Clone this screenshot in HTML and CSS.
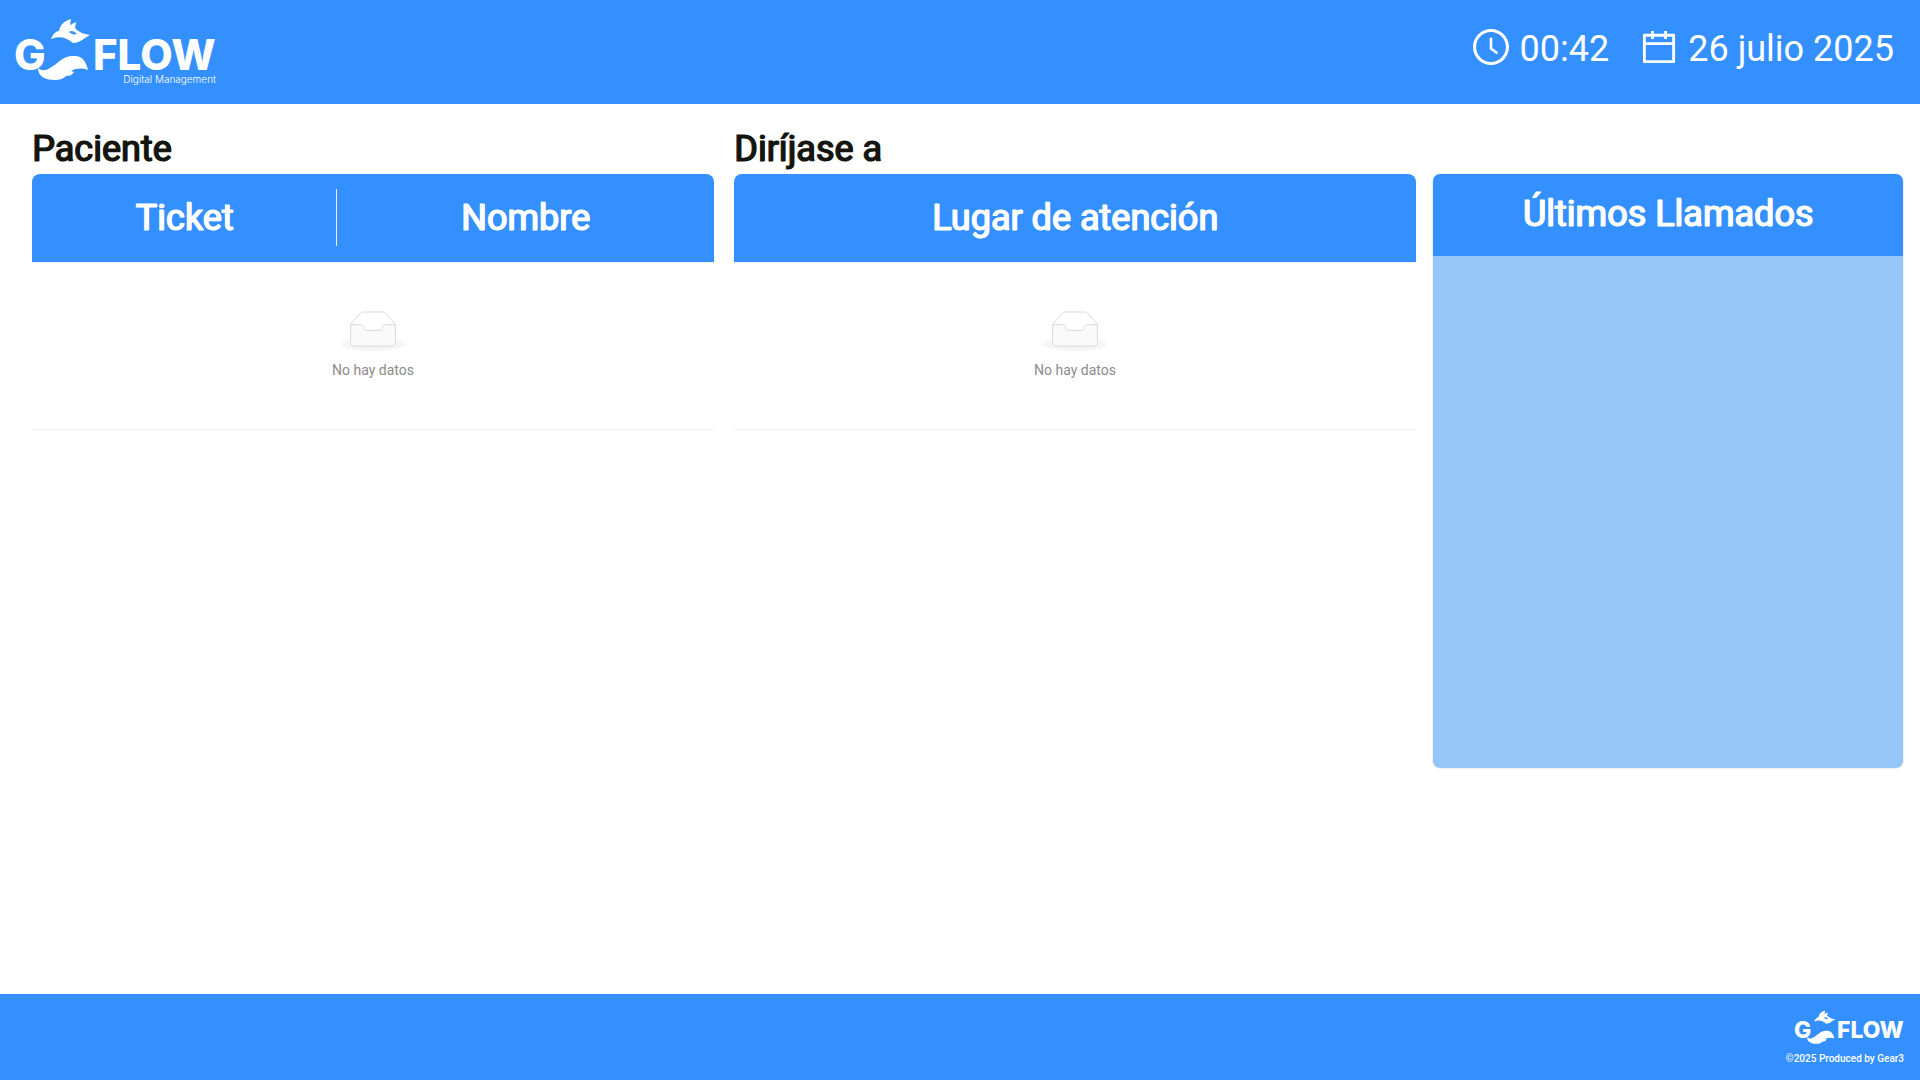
FILE: index.html
```html
<!DOCTYPE html>
<html lang="es">
<head>
  <meta charset="UTF-8">
  <meta name="viewport" content="width=device-width, initial-scale=1.0">
  <title>GoFlow - Llamados</title>
  <link rel="stylesheet" href="styles.css">
</head>
<body>

  <!-- Dibujos reutilizables -->
  <svg class="defs" aria-hidden="true">
    <defs>
      <g id="logo">
        <text class="logo-word" x="0" y="52">G</text>
        <g transform="translate(2 1)">
          <path d="M22 49 C26 52 29 52 34 49 C42 45 46 37 57 37 C66 36 70 42 72 51 C66 49 61 49 55 52 L58 53 C56 56 54 57 50 57 C47 60 43 61 39 61 C30 61 22 58 22 49Z"/>
          <path d="M35 20 C37 15 40 12 43 12 C44 6 48 2 55 0 L54 6 L60 3 L59 9 C63 13 67 15 74 16 C68 19 64 24 57 24 C50 18 43 17 35 20Z"/>
          <path class="logo-eye" d="M53 13 C55 11 58 12 61 15 C58 16 55 15 53 13Z"/>
        </g>
        <text class="logo-word" x="79" y="52">FLOW</text>
      </g>
      <symbol id="empty" viewBox="0 0 64 41">
        <g transform="translate(0 1)" fill-rule="evenodd">
          <ellipse fill="#f5f5f5" cx="32" cy="33" rx="32" ry="7"/>
          <g fill="none" stroke="#d9d9d9">
            <path d="M55 12.76L44.854 1.258C44.367.474 43.656 0 42.907 0H21.093c-.749 0-1.46.474-1.947 1.257L9 12.761V22h46v-9.24z"/>
            <path fill="#fafafa" d="M41.613 15.931c0-1.605.994-2.93 2.227-2.931H55v18.137C55 33.26 53.68 35 52.05 35h-40.1C10.32 35 9 33.259 9 31.137V13h11.16c1.233 0 2.227 1.323 2.227 2.928v.022c0 1.605 1.005 2.901 2.237 2.901h14.752c1.232 0 2.237-1.308 2.237-2.913v-.007z"/>
          </g>
        </g>
      </symbol>
    </defs>
  </svg>

  <header class="topbar">
    <svg class="brand-logo" viewBox="0 0 204 70" role="img" aria-label="GoFlow Digital Management">
      <use href="#logo"/>
      <text class="brand-sub" x="202" y="65">Digital Management</text>
    </svg>
    <div class="clock">
      <span class="clock-item">
        <svg class="clock-icon" viewBox="64 64 896 896"><path d="M512 64C264.600 64 64 264.600 64 512s200.600 448 448 448 448-200.600 448-448S759.400 64 512 64zm0 820c-205.400 0-372-166.600-372-372s166.600-372 372-372 372 166.600 372 372-166.600 372-372 372z"/><path d="M686.700 638.600L544.100 535.500V288c0-4.400-3.600-8-8-8H488c-4.400 0-8 3.600-8 8v275.400c0 2.600 1.200 5 3.300 6.500l165.400 120.600c3.600 2.600 8.600 1.800 11.200-1.700l28.600-39c2.600-3.700 1.800-8.700-1.800-11.200z"/></svg>
        <time>00:42</time>
      </span>
      <span class="clock-item">
        <svg class="clock-icon" viewBox="64 64 896 896"><path d="M880 184H712v-64c0-4.400-3.600-8-8-8h-56c-4.400 0-8 3.600-8 8v64H384v-64c0-4.400-3.600-8-8-8h-56c-4.400 0-8 3.600-8 8v64H144c-17.700 0-32 14.300-32 32v664c0 17.700 14.300 32 32 32h736c17.700 0 32-14.300 32-32V216c0-17.700-14.300-32-32-32zm-40 656H184V460h656v380zM184 392V256h128v48c0 4.400 3.600 8 8 8h56c4.400 0 8-3.600 8-8v-48h256v48c0 4.400 3.600 8 8 8h56c4.400 0 8-3.600 8-8v-48h128v136H184z"/></svg>
        <time>26 julio 2025</time>
      </span>
    </div>
  </header>

  <main class="content">
    <section class="board">
      <h2 class="board-title" id="t-paciente">Paciente</h2>
      <table class="board-table" aria-labelledby="t-paciente">
        <colgroup><col class="col-ticket"><col></colgroup>
        <thead>
          <tr><th>Ticket</th><th>Nombre</th></tr>
        </thead>
        <tbody>
          <tr>
            <td colspan="2">
              <svg class="empty-icon"><use href="#empty"/></svg>
              <p class="empty-text">No hay datos</p>
            </td>
          </tr>
        </tbody>
      </table>
    </section>

    <section class="board">
      <h2 class="board-title" id="t-dirijase">Diríjase a</h2>
      <table class="board-table" aria-labelledby="t-dirijase">
        <thead>
          <tr><th>Lugar de atención</th></tr>
        </thead>
        <tbody>
          <tr>
            <td>
              <svg class="empty-icon"><use href="#empty"/></svg>
              <p class="empty-text">No hay datos</p>
            </td>
          </tr>
        </tbody>
      </table>
    </section>

    <aside class="calls">
      <h2 class="calls-title">Últimos Llamados</h2>
      <div class="calls-body"></div>
    </aside>
  </main>

  <footer class="footer">
    <svg class="footer-logo" viewBox="0 0 202 64" role="img" aria-label="GoFlow"><use href="#logo"/></svg>
    <p class="footer-text">©2025 Produced by Gear3</p>
  </footer>

</body>
</html>
```
FILE: styles.css
```css
* {
  box-sizing: border-box;
}
body {
  display: flex;
  flex-direction: column;
  min-height: 100vh;
  margin: 0;
  font-family: Roboto, sans-serif;
  font-size: 14px;
  line-height: 22px;
  background: #fff;
  color: #141510;
}
h2, p {
  margin: 0;
}
.defs {
  position: absolute;
  width: 0;
  height: 0;
}

/* Cabecera */
.topbar {
  display: flex;
  justify-content: space-between;
  height: 104px;
  padding: 18px 26px 0 14px;
  background: #3490ff;
  color: #fff;
}
.brand-logo {
  width: 204px;
  height: 70px;
  fill: #fff;
}
.logo-word {
  font-family: Inter, sans-serif;
  font-size: 42px;
  font-weight: 800;
}
.logo-eye {
  fill: #3490ff;
}
.brand-sub {
  font-family: Inter, sans-serif;
  font-size: 10px;
  font-weight: 300;
  text-anchor: end;
}
.clock {
  display: flex;
  gap: 32px;
  font-size: 36px;
  line-height: 62px;
}
.clock-item {
  display: flex;
  gap: 11px;
}
.clock-icon {
  width: 36px;
  height: 36px;
  margin-top: 11px;
  fill: #fff;
}

/* Tablas */
.content {
  display: flex;
  flex: 1;
  align-items: flex-start;
  padding: 20px 16px 0 32px;
}
.board {
  flex: 1;
}
.board + .board {
  margin-left: 20px;
}
.board-title, .board-table th, .calls-title {
  font-size: 36px;
  font-weight: 400;
  -webkit-text-stroke: 1px currentColor;
  text-shadow: 1px 0 0 currentColor;
}
.board-title {
  line-height: 50px;
}
.board-table {
  width: 100%;
  border-spacing: 0;
  table-layout: fixed;
}
.col-ticket {
  width: 305px;
}
.board-table th {
  position: relative;
  height: 89px;
  padding: 0 16px 1px;
  line-height: 56px;
  background: #3490ff;
  border-bottom: 1px solid #f0f0f0;
  color: #fff;
}
.board-table th:first-child {
  border-top-left-radius: 8px;
}
.board-table th:last-child {
  border-top-right-radius: 8px;
}
.board-table th + th::before {
  content: "";
  position: absolute;
  top: 15px;
  left: -1px;
  width: 1px;
  height: 57px;
  background: #f0f0f0;
}
.board-table td {
  padding: 48px 16px;
  border-bottom: 1px solid #f0f0f0;
  text-align: center;
}
.empty-icon {
  display: block;
  width: 64px;
  height: 40px;
  margin: 0 auto 8px;
}
.empty-text {
  color: #8c8c8c;
}

/* Últimos llamados */
.calls {
  width: 472px;
  margin: 49px 0 0 16px;
  border: 1px solid #f0f0f0;
  border-radius: 8px;
  overflow: hidden;
}
.calls-title {
  padding-bottom: 2px;
  line-height: 80px;
  text-align: center;
  background: #3490ff;
  color: #fff;
}
.calls-body {
  height: 512px;
  background: #96c5f9;
}

/* Pie */
.footer {
  display: flex;
  flex-direction: column;
  align-items: flex-end;
  height: 86px;
  padding: 16px 16px 0;
  background: #3490ff;
  color: #fff;
}
.footer-logo {
  width: 110px;
  height: 35px;
  fill: #fff;
}
.footer-text {
  margin-top: 3px;
  font-size: 10px;
  font-weight: 500;
}
```
